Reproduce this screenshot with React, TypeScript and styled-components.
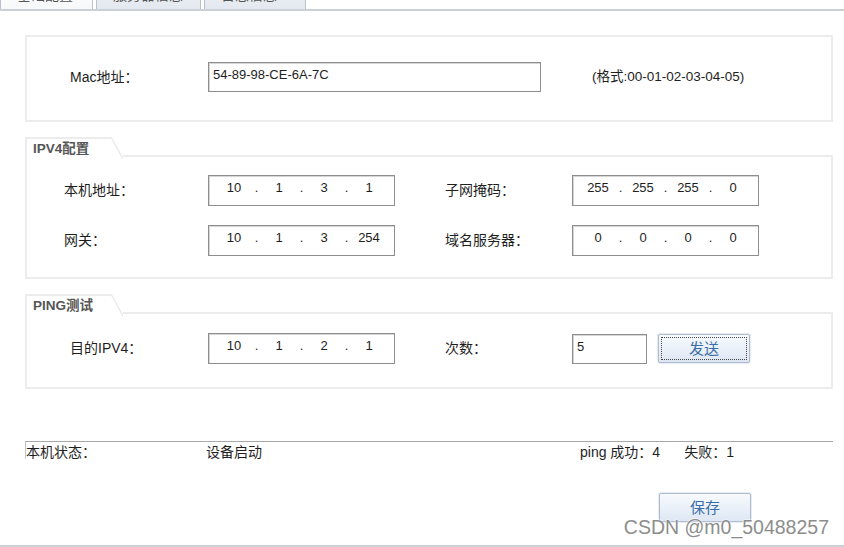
import React from "react";
import styled, { createGlobalStyle } from "styled-components";

const Global = createGlobalStyle`
  html, body { margin: 0; padding: 0; background: #fff; }
  * { box-sizing: border-box; }
`;

const Page = styled.div`
  position: relative;
  width: 844px;
  height: 547px;
  overflow: hidden;
  background: #fff;
  border-bottom: 2px solid #c9d1db;
  font-family: "Liberation Sans", "Noto Sans CJK SC", sans-serif;
  font-size: 14px;
  color: #1e1e1e;
  display: flex;
  flex-direction: column;
`;

const TabStrip = styled.div`
  height: 11px;
  display: flex;
  align-items: flex-end;
  gap: 3px;
  overflow: hidden;
  border-bottom: 2px solid #cbd0d6;
`;

const Tab = styled.div<{ $active?: boolean; $w: number }>`
  flex: none;
  width: ${(p) => p.$w}px;
  height: 30px;
  padding: 0 0 7px 16px;
  display: flex;
  align-items: flex-end;
  border: 1px solid #b9c2cc;
  border-bottom: none;
  background: ${(p) => (p.$active ? "linear-gradient(#ffffff, #f6f8fa)" : "linear-gradient(#eef2f6, #e3e9ef)")};
  color: #555;
  font-size: 14px;
  line-height: 1;
`;

const Content = styled.div`
  padding: 0 11px 0 25px;
  display: flex;
  flex-direction: column;
`;

const MacPanel = styled.div`
  margin-top: 24px;
  height: 87px;
  border: 2px solid #ececec;
  display: flex;
  align-items: center;
  padding: 0 0 3px 43px;
`;

const Label = styled.div<{ $w: number }>`
  flex: none;
  width: ${(p) => p.$w}px;
  line-height: 17px;
  white-space: nowrap;
`;

const TextBox = styled.div<{ $w: number }>`
  flex: none;
  width: ${(p) => p.$w}px;
  height: 30px;
  border: 1px solid #8e8e8e;
  box-shadow: inset 1px 1px 0 #d6d6d6;
  background: #fff;
  padding: 4px 0 0 4px;
  font-size: 13px;
  line-height: 16px;
  white-space: nowrap;
`;

const Hint = styled.div`
  margin-left: 51px;
  margin-bottom: 5px;
  font-size: 13.5px;
  white-space: nowrap;
`;

const Section = styled.section`
  margin-top: 15px;
  display: flex;
  flex-direction: column;
`;

const SectionHead = styled.div`
  height: 20px;
  display: flex;
  align-items: stretch;
`;

const SectionTab = styled.div`
  position: relative;
  width: 86px;
  padding: 2px 0 0 6px;
  border-top: 2px solid #ececec;
  border-left: 2px solid #ececec;
  font-weight: bold;
  font-size: 13.5px;
  color: #555;
  line-height: 16px;
  white-space: nowrap;

  &::after {
    content: "";
    position: absolute;
    top: -2px;
    right: -12px;
    width: 12px;
    height: 22px;
    background: linear-gradient(
      to top right,
      transparent calc(50% - 1.2px),
      #e6e6e6 50%,
      transparent calc(50% + 1.2px)
    );
  }
`;

const SectionFill = styled.div`
  flex: 1;
  margin-left: 12px;
  border-bottom: 2px solid #ececec;
`;

const SectionBody = styled.div<{ $pt: number; $pb: number; $pl: number }>`
  border: 2px solid #ececec;
  border-top: none;
  padding: ${(p) => `${p.$pt}px 0 ${p.$pb}px ${p.$pl}px`};
  display: flex;
  flex-direction: column;
  gap: 19px;
`;

const Row = styled.div<{ $lead: number }>`
  display: grid;
  grid-template-columns: ${(p) => p.$lead}px auto;
  align-items: center;
`;

const Field = styled.div`
  display: flex;
  align-items: center;
`;

const IpBox = styled.div`
  flex: none;
  width: 187px;
  height: 31px;
  border: 1px solid #8e8e8e;
  box-shadow: inset 1px 1px 0 #d6d6d6;
  background: #fff;
  padding: 4px 0 0 8px;
  display: flex;
  align-items: flex-start;
  font-size: 13px;
  line-height: 16px;
`;

const Octet = styled.span`
  width: 34px;
  text-align: center;
`;

const Dot = styled.span`
  width: 11px;
  text-align: center;
`;

const Button = styled.button<{ $focused?: boolean }>`
  flex: none;
  width: 92px;
  height: 29px;
  padding: 0 0 3px;
  border: 1px solid #aebccd;
  border-radius: 2px;
  background: linear-gradient(#f7fafd, #e9f0f8 55%, #dde7f3);
  color: #3b6ea8;
  font-family: "Liberation Sans", "Noto Sans CJK SC", sans-serif;
  font-size: 15px;
  outline: ${(p) => (p.$focused ? "1px dotted #444" : "none")};
  outline-offset: -4px;
  box-shadow: 0 0 0 1px #e6ecf3;
`;

const StatusBar = styled.div`
  position: relative;
  margin-top: 52px;
  border-top: 1px solid #a8a8a8;
  display: grid;
  grid-template-columns: 180px 374px auto;
  padding: 2px 0 0 1px;
  line-height: 17px;
  white-space: nowrap;

  &::before {
    content: "";
    position: absolute;
    left: 0;
    top: 0;
    width: 1px;
    height: 17px;
    background: #c4c4c4;
  }
`;

const Gap = styled.span`
  display: inline-block;
  width: 24px;
`;

const SaveRow = styled.div`
  margin-top: 32px;
  padding-left: 634px;
`;

const Watermark = styled.div`
  position: absolute;
  right: 15px;
  bottom: 7px;
  font-family: "Liberation Sans", sans-serif;
  font-size: 19.5px;
  line-height: 22px;
  color: #8d8d8d;
  text-shadow: 0 0 2px #fff, 0 0 2px #fff;
  white-space: nowrap;
`;

function Ip({ value }: { value: string }) {
  const parts = value.split(".");
  return (
    <IpBox>
      {parts.map((p, i) => (
        <React.Fragment key={i}>
          {i > 0 && <Dot>.</Dot>}
          <Octet>{p}</Octet>
        </React.Fragment>
      ))}
    </IpBox>
  );
}

export default function App() {
  return (
    <Page>
      <Global />
      <TabStrip>
        <Tab $active $w={93}>基础配置</Tab>
        <Tab $w={105}>服务器信息</Tab>
        <Tab $w={102}>日志信息</Tab>
      </TabStrip>

      <Content>
        <MacPanel>
          <Label $w={138}>Mac地址：</Label>
          <TextBox $w={333}>54-89-98-CE-6A-7C</TextBox>
          <Hint>(格式:00-01-02-03-04-05)</Hint>
        </MacPanel>

        <Section>
          <SectionHead>
            <SectionTab>IPV4配置</SectionTab>
            <SectionFill />
          </SectionHead>
          <SectionBody $pt={18} $pb={21} $pl={37}>
            <Row $lead={381}>
              <Field>
                <Label $w={144}>本机地址：</Label>
                <Ip value="10.1.3.1" />
              </Field>
              <Field>
                <Label $w={127}>子网掩码：</Label>
                <Ip value="255.255.255.0" />
              </Field>
            </Row>
            <Row $lead={381}>
              <Field>
                <Label $w={144}>网关：</Label>
                <Ip value="10.1.3.254" />
              </Field>
              <Field>
                <Label $w={127}>域名服务器：</Label>
                <Ip value="0.0.0.0" />
              </Field>
            </Row>
          </SectionBody>
        </Section>

        <Section>
          <SectionHead>
            <SectionTab>PING测试</SectionTab>
            <SectionFill />
          </SectionHead>
          <SectionBody $pt={19} $pb={23} $pl={43}>
            <Row $lead={375}>
              <Field>
                <Label $w={138}>目的IPV4：</Label>
                <Ip value="10.1.2.1" />
              </Field>
              <Field>
                <Label $w={127}>次数：</Label>
                <TextBox $w={75}>5</TextBox>
                <Button $focused style={{ marginLeft: 11 }}>发送</Button>
              </Field>
            </Row>
          </SectionBody>
        </Section>

        <StatusBar>
          <span>本机状态：</span>
          <span>设备启动</span>
          <span>
            ping 成功：4<Gap />失败：1
          </span>
        </StatusBar>

        <SaveRow>
          <Button>保存</Button>
        </SaveRow>
      </Content>

      <Watermark>CSDN @m0_50488257</Watermark>
    </Page>
  );
}
